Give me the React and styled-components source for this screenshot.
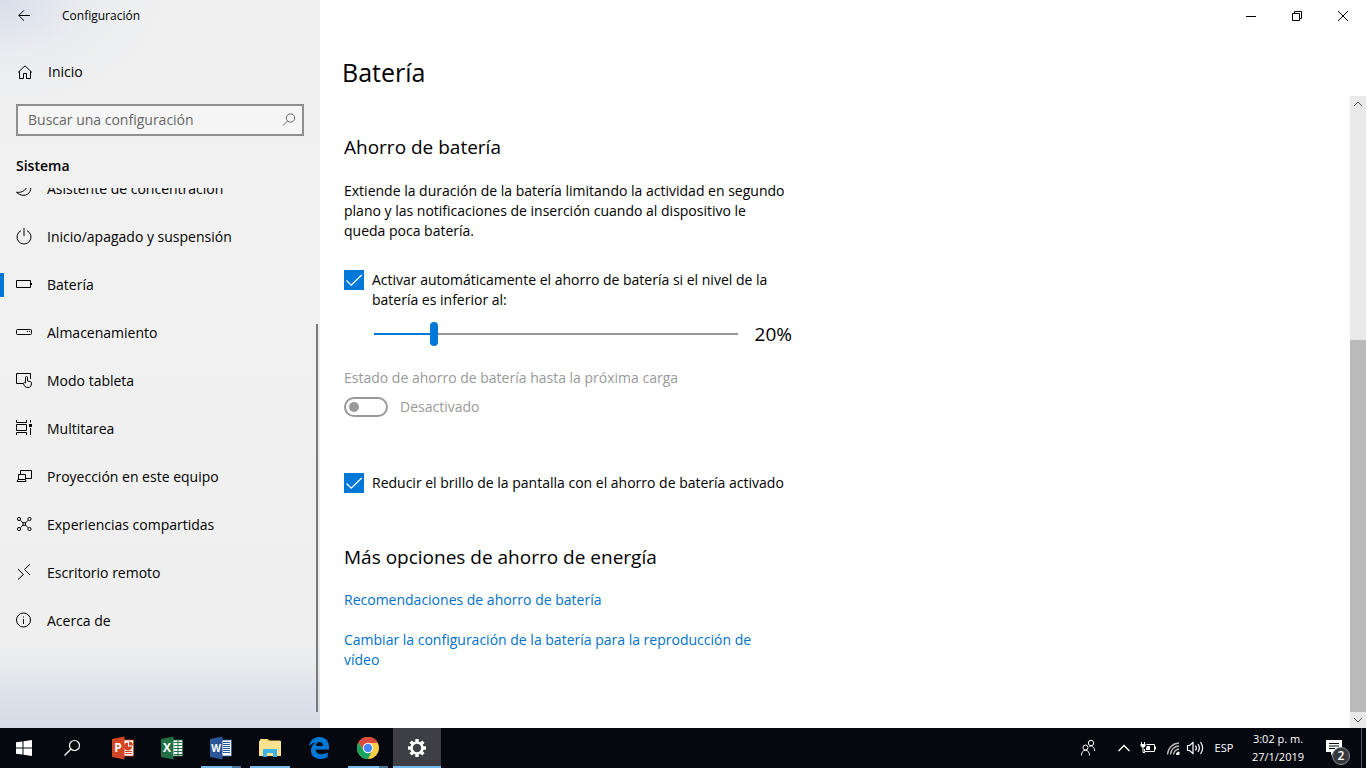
import React, { useState } from "react";
import styled, { createGlobalStyle } from "styled-components";

const GlobalStyle = createGlobalStyle`
  * {
    box-sizing: border-box;
  }
  body {
    margin: 0;
    overflow: hidden;
    background: #fff;
    color: #000;
    font-family: "Segoe UI", "Open Sans", "Noto Sans", sans-serif;
    font-size: 14px;
    line-height: 20px;
  }
  button, input {
    font: inherit;
    color: inherit;
    margin: 0;
    padding: 0;
  }
  button {
    border: 0;
    background: none;
  }
`;

const Desktop = styled.div`
  display: flex;
  flex-direction: column;
  height: 100vh;
`;

const SettingsWindow = styled.div`
  display: flex;
  flex: 1;
  min-height: 0;
`;

/* ---------- sidebar ---------- */

const Sidebar = styled.aside`
  display: flex;
  flex-direction: column;
  flex: 0 0 320px;
  background:
    radial-gradient(ellipse 170px 110px at 0 0, #d8deeb 0%, rgba(230, 233, 240, 0.6) 50%, rgba(240, 240, 240, 0) 100%),
    linear-gradient(to bottom, #f0f0f0 0%, #f1f1f1 40%, #efefef 86%, #ebecee 91%, #dde2eb 95%, #d6dce7 100%);
`;

const AppBar = styled.div`
  display: flex;
  align-items: center;
  height: 32px;
  font-size: 12px;
`;

const BackButton = styled.button`
  display: flex;
  align-items: center;
  justify-content: center;
  width: 48px;
  height: 32px;
  margin-right: 14px;
`;

const HomeLink = styled.a`
  display: flex;
  align-items: center;
  gap: 16px;
  height: 48px;
  margin-top: 16px;
  padding-left: 16px;
  color: inherit;
  text-decoration: none;
`;

const SearchBox = styled.label`
  display: flex;
  align-items: center;
  height: 32px;
  margin: 8px 16px 0;
  padding: 0 6px 0 10px;
  border: 2px solid #8f8f8f;
  background: #f5f5f5;
  color: #666;
`;

const SearchInput = styled.input`
  flex: 1;
  min-width: 0;
  border: 0;
  outline: 0;
  background: none;
  &::placeholder {
    color: #666;
    opacity: 1;
  }
`;

const SectionName = styled.h2`
  margin: 20px 16px 0;
  font-size: 14px;
  line-height: 20px;
  font-weight: 600;
`;

const Nav = styled.nav`
  position: relative;
  flex: 1;
  min-height: 0;
  margin-top: 12px;
  overflow: hidden;
`;

/* the list is scrolled by half a row */
const NavList = styled.ul`
  list-style: none;
  margin: -23px 0 0;
  padding: 0;
`;

const NavLink = styled.a`
  display: flex;
  align-items: center;
  gap: 15px;
  height: 48px;
  padding-left: 16px;
  background: ${(props) =>
    props.$active ? "linear-gradient(#0078d7, #0078d7) left center / 4px 24px no-repeat" : "none"};
  color: inherit;
  text-decoration: none;
`;

const NavScroll = styled.div`
  position: absolute;
  top: 136px;
  right: 2px;
  bottom: 16px;
  width: 2px;
  background: #7a7a7a;
`;

/* ---------- content ---------- */

const Main = styled.main`
  display: flex;
  flex-direction: column;
  flex: 1;
  min-width: 0;
  background: #fff;
`;

const WindowButtons = styled.div`
  display: flex;
  justify-content: flex-end;
  height: 32px;
`;

const WindowButton = styled.button`
  display: flex;
  align-items: center;
  justify-content: center;
  width: 46px;
  height: 32px;
`;

const PageTitle = styled.h1`
  margin: 20px 0 4px 22px;
  font-size: 25px;
  line-height: 40px;
  font-weight: 400;
`;

const ScrollArea = styled.div`
  display: flex;
  flex: 1;
  min-height: 0;
`;

const Content = styled.div`
  flex: 1;
  padding: 36px 24px 0;
`;

const Column = styled.div`
  max-width: 448px;
`;

const Heading = styled.h2`
  margin: 0 0 19px;
  font-size: 19px;
  line-height: 30px;
  font-weight: 400;
`;

const Text = styled.p`
  max-width: 444px;
  margin: 0;
`;

const CheckRow = styled.label`
  display: flex;
  align-items: flex-start;
  gap: 8px;
  margin-top: ${(props) => props.$top};
`;

const CheckHolder = styled.span`
  display: grid;
  flex: 0 0 20px;
  height: 20px;
  > * {
    grid-area: 1 / 1;
  }
  svg {
    pointer-events: none;
  }
`;

const CheckInput = styled.input`
  appearance: none;
  width: 20px;
  height: 20px;
  border: 2px solid #333;
  &:checked {
    border: 0;
    background: #0078d7;
  }
`;

const SliderRow = styled.div`
  display: flex;
  align-items: center;
  justify-content: space-between;
  height: 28px;
  margin-top: 10px;
  padding-left: 30px;
`;

const Slider = styled.input`
  appearance: none;
  width: 364px;
  height: 24px;
  background: none;
  &::-webkit-slider-runnable-track {
    height: 2px;
    background: linear-gradient(to right, #0078d7 var(--fill), #999 var(--fill));
  }
  &::-webkit-slider-thumb {
    appearance: none;
    width: 8px;
    height: 24px;
    margin-top: -11px;
    border-radius: 4px;
    background: #0078d7;
  }
`;

const SliderValue = styled.output`
  font-size: 19px;
  line-height: 28px;
`;

const Toggle = styled.div`
  display: grid;
  gap: 9px;
  margin-top: 20px;
  color: #999;
`;

const ToggleRow = styled.div`
  display: flex;
  align-items: center;
  gap: 12px;
`;

const Switch = styled.input`
  appearance: none;
  display: flex;
  align-items: center;
  width: 44px;
  height: 20px;
  padding-left: 3px;
  border: 2px solid #999;
  border-radius: 10px;
  &::before {
    content: "";
    width: 10px;
    height: 10px;
    border-radius: 5px;
    background: #999;
  }
`;

const MoreOptions = styled.section`
  display: grid;
  gap: 20px;
  margin-top: 49px;
  ${Heading} {
    margin: 0 0 -2px;
  }
`;

const TextLink = styled.a`
  max-width: 444px;
  color: #0072c9;
  text-decoration: none;
`;

const ScrollBar = styled.div`
  display: flex;
  flex-direction: column;
  flex: 0 0 16px;
  background: #e9e9e9;
`;

const ScrollArrow = styled.button`
  display: flex;
  align-items: center;
  justify-content: center;
  width: 16px;
  height: 16px;
`;

const ScrollTrack = styled.div`
  display: flex;
  flex: 1;
  align-items: flex-end;
`;

const ScrollThumb = styled.div`
  width: 16px;
  height: 62%;
  background: #bababa;
`;

/* ---------- taskbar ---------- */

const Taskbar = styled.footer`
  display: flex;
  justify-content: space-between;
  flex: 0 0 40px;
  background: #05090f;
  color: #fff;
`;

const TaskGroup = styled.div`
  display: flex;
  align-items: stretch;
  gap: ${(props) => props.$gap || "0"};
  margin-left: ${(props) => props.$start || "0"};
`;

const TaskButton = styled.button`
  display: flex;
  align-items: center;
  justify-content: center;
  width: 48px;
  height: 40px;
  background-color: ${(props) => (props.$state === "active" ? "#3d3f44" : "transparent")};
  background-image: ${(props) => {
    if (props.$state === "active") return "linear-gradient(#76b9ed, #76b9ed)";
    if (props.$state === "open") return "linear-gradient(#76b9ed, #76b9ed)";
    if (props.$state === "many") return "linear-gradient(to right, #76b9ed 31px, #4b7597 31px)";
    return "none";
  }};
  background-repeat: no-repeat;
  background-position: center bottom;
  background-size: ${(props) => (props.$state === "active" ? "48px 2px" : "40px 2px")};
`;

const Tray = styled.div`
  display: flex;
  align-items: center;
  font-size: 11px;
  line-height: 18px;
`;

const TrayButton = styled.button`
  display: flex;
  align-items: center;
  justify-content: center;
  width: ${(props) => props.$width};
  height: 40px;
`;

const Clock = styled.button`
  width: 68px;
  height: 40px;
  text-align: center;
`;

const Notifications = styled.button`
  position: relative;
  display: flex;
  align-items: center;
  justify-content: center;
  width: 44px;
  height: 40px;
`;

const Badge = styled.span`
  position: absolute;
  right: 6px;
  bottom: 3px;
  width: 18px;
  height: 18px;
  border: 1px solid #8d8f92;
  border-radius: 50%;
  background: #35383c;
  font-size: 12px;
  line-height: 16px;
  font-weight: 600;
`;

const ShowDesktop = styled.button`
  width: 5px;
  height: 40px;
  margin-left: 5px;
  border-left: 1px solid #55585c;
`;

/* ---------- icons ---------- */

const Line = ({ w = 16, h = 16, children, ...rest }) => (
  <svg
    width={w}
    height={h}
    viewBox={`0 0 ${w} ${h}`}
    fill="none"
    stroke="currentColor"
    overflow="visible"
    aria-hidden="true"
    {...rest}
  >
    {children}
  </svg>
);

const icons = {
  focus: (
    <Line>
      <path d="M13.500 2.500C17 8 13 14.300 8 14.300c-3 0-5.500-1-7.500-3C6 12 12 9 11 1.500" />
    </Line>
  ),
  power: (
    <Line>
      <path d="M5 1.700a7 7 0 1 0 6 0" />
      <path d="M8-1v8" strokeWidth="2" stroke="#777" />
    </Line>
  ),
  battery: (
    <Line>
      <path d="M.5 3.500h14v7H.5zM15.500 6v2" />
    </Line>
  ),
  storage: (
    <Line>
      <rect x=".5" y="4.500" width="15" height="5" rx="1" />
      <path d="M11 6.500h1M13 6.500h1" />
    </Line>
  ),
  tablet: (
    <Line>
      <path d="M7 10.500H.5V.5h14V6" />
      <path d="M9.500 10V4.500a1 1 0 0 1 2 0V8l2.500.5c1.100.2 1.500.7 1.500 1.600 0 3-1.200 4.400-3.500 4.400-2.600 0-4-1.500-4.500-4 0-1 1-1.500 2-.5" />
    </Line>
  ),
  multitask: (
    <Line>
      <path d="M.5-1v2.500h10V-1M.5 3.500h10v6H.5zM.5 14v-2.500h10V14M14.500-1v2.500M14.500 7v7" />
      <path d="M13 3h3v3h-3z" fill="currentColor" stroke="none" />
    </Line>
  ),
  project: (
    <Line>
      <path d="M4.500 5V1.500h11v8H10M2.500 10.500v-5h7v5M1 12.500h9l-.5-2H2z" />
    </Line>
  ),
  shared: (
    <Line>
      <circle cx="3" cy="2" r="1.600" />
      <circle cx="13.500" cy="2" r="1.600" />
      <circle cx="3" cy="12" r="1.600" />
      <circle cx="13.500" cy="12" r="1.600" />
      <path d="M4.500 3.300 7 6M12 3.300 9.500 6M4.500 10.700 7 8M12 10.700 9.500 8M7 5.700h2.500v2.600H7z" />
    </Line>
  ),
  remote: (
    <Line>
      <path d="M2 4.200 7.500 9.500 2 14.500M14-.8 8.500 4.500 14 10" />
    </Line>
  ),
  info: (
    <Line>
      <circle cx="7.500" cy="7" r="7" />
      <path d="M7.500 6v5M7.500 3.500v1" />
    </Line>
  ),
};

const OfficeIcon = ({ color, letter, children }) => (
  <svg width="24" height="24" viewBox="0 0 24 24" aria-hidden="true">
    <path d="M12 4h10.500v16H12z" fill="#fff" stroke={color} strokeWidth=".8" />
    {children}
    <path d="M1 3 13.500.5v23L1 21z" fill={color} />
    <text x="7" y="16" fill="#fff" fontSize={letter === "W" ? 10 : 12} fontWeight="700" textAnchor="middle">
      {letter}
    </text>
  </svg>
);

const navItems = [
  { icon: "focus", label: "Asistente de concentración" },
  { icon: "power", label: "Inicio/apagado y suspensión" },
  { icon: "battery", label: "Batería", active: true },
  { icon: "storage", label: "Almacenamiento" },
  { icon: "tablet", label: "Modo tableta" },
  { icon: "multitask", label: "Multitarea" },
  { icon: "project", label: "Proyección en este equipo" },
  { icon: "shared", label: "Experiencias compartidas" },
  { icon: "remote", label: "Escritorio remoto" },
  { icon: "info", label: "Acerca de" },
];

const CheckOption = ({ top, children }) => {
  const [checked, setChecked] = useState(true);
  return (
    <CheckRow $top={top}>
      <CheckHolder>
        <CheckInput type="checkbox" checked={checked} onChange={() => setChecked(!checked)} />
        {checked && (
          <Line w={20} h={20} stroke="#fff" strokeWidth="1.300">
            <path d="m2.500 10.500 4.700 4.700L17.700 5" />
          </Line>
        )}
      </CheckHolder>
      <span>{children}</span>
    </CheckRow>
  );
};

const SettingsSidebar = () => (
  <Sidebar>
    <AppBar>
      <BackButton aria-label="Atrás">
        <Line w={12} h={12}>
          <path d="M12 5.500H.8M6 .3.800 5.500 6 10.700" />
        </Line>
      </BackButton>
      <span>Configuración</span>
    </AppBar>
    <HomeLink href="#inicio">
      <Line>
        <path d="M2 8.500 9 1.800l7 6.700M3.500 7.500v7h4v-5h3v5h4v-7" />
      </Line>
      Inicio
    </HomeLink>
    <SearchBox>
      <SearchInput type="text" placeholder="Buscar una configuración" aria-label="Buscar una configuración" />
      <Line w={14} h={14}>
        <circle cx="8.500" cy="5" r="4.200" />
        <path d="M5.500 8 1 12.500" />
      </Line>
    </SearchBox>
    <SectionName>Sistema</SectionName>
    <Nav>
      <NavList>
        {navItems.map((item) => (
          <li key={item.label}>
            <NavLink href={"#" + item.icon} $active={item.active}>
              {icons[item.icon]}
              {item.label}
            </NavLink>
          </li>
        ))}
      </NavList>
      <NavScroll />
    </Nav>
  </Sidebar>
);

const BatteryPage = () => {
  const [level, setLevel] = useState(20);
  const fill = ((level - 5) / 95) * 100;

  return (
    <Main>
      <WindowButtons>
        <WindowButton aria-label="Minimizar">
          <Line w={10} h={10}>
            <path d="M0 5.500h10" />
          </Line>
        </WindowButton>
        <WindowButton aria-label="Restaurar">
          <Line w={10} h={10}>
            <path d="M.5 2.500h7v7h-7zM2.500 2.500v-2h7v7h-2" />
          </Line>
        </WindowButton>
        <WindowButton aria-label="Cerrar">
          <Line w={10} h={10}>
            <path d="m0 0 10 10M10 0 0 10" />
          </Line>
        </WindowButton>
      </WindowButtons>
      <PageTitle>Batería</PageTitle>
      <ScrollArea>
        <Content>
          <Column>
            <Heading>Ahorro de batería</Heading>
            <Text>
              Extiende la duración de la batería limitando la actividad en segundo plano y las
              notificaciones de inserción cuando al dispositivo le queda poca batería.
            </Text>
            <CheckOption top="29px">
              Activar automáticamente el ahorro de batería si el nivel de la batería es inferior al:
            </CheckOption>
            <SliderRow>
              <Slider
                id="level"
                type="range"
                min="5"
                max="100"
                value={level}
                aria-label="Nivel de batería"
                onChange={(e) => setLevel(Number(e.target.value))}
                style={{ "--fill": `${fill}%` }}
              />
              <SliderValue htmlFor="level">{level}%</SliderValue>
            </SliderRow>
            <Toggle>
              <label htmlFor="saver">Estado de ahorro de batería hasta la próxima carga</label>
              <ToggleRow>
                <Switch id="saver" type="checkbox" role="switch" disabled />
                <span>Desactivado</span>
              </ToggleRow>
            </Toggle>
            <CheckOption top="56px">
              Reducir el brillo de la pantalla con el ahorro de batería activado
            </CheckOption>
            <MoreOptions>
              <Heading>Más opciones de ahorro de energía</Heading>
              <TextLink href="#recomendaciones">Recomendaciones de ahorro de batería</TextLink>
              <TextLink href="#video">
                Cambiar la configuración de la batería para la reproducción de vídeo
              </TextLink>
            </MoreOptions>
          </Column>
        </Content>
        <ScrollBar>
          <ScrollArrow aria-label="Subir">
            <Line w={8} h={8} stroke="#555">
              <path d="m0 6 4-4 4 4" />
            </Line>
          </ScrollArrow>
          <ScrollTrack>
            <ScrollThumb />
          </ScrollTrack>
          <ScrollArrow aria-label="Bajar">
            <Line w={8} h={8} stroke="#555">
              <path d="m0 2 4 4 4-4" />
            </Line>
          </ScrollArrow>
        </ScrollBar>
      </ScrollArea>
    </Main>
  );
};

const BottomBar = () => (
  <Taskbar>
    <TaskGroup>
      <TaskButton aria-label="Inicio">
        <svg width="16" height="16" viewBox="0 0 16 16" fill="#fff">
          <path d="M0 2.300 6.500 1.400v6.100H0zM7.500 1.200 16 0v7.500H7.500zM0 8.500h6.500v6.100L0 13.700zM7.500 8.500H16V16l-8.500-1.200z" />
        </svg>
      </TaskButton>
      <TaskButton aria-label="Buscar">
        <Line strokeWidth="1.200">
          <circle cx="10.500" cy="5.500" r="5" />
          <path d="M7 9 .5 15.500" />
        </Line>
      </TaskButton>
      <TaskGroup $gap="1px" $start="3px">
        <TaskButton aria-label="PowerPoint">
          <OfficeIcon color="#d24625" letter="P">
            <path d="M17 6.500v4h4a4 4 0 1 1-4-4z" fill="#d24625" />
            <path d="M18 5.500a4 4 0 0 1 4 4h-4z" fill="#d24625" />
            <path d="M14 15.500h7M14 17.500h7" stroke="#d24625" />
          </OfficeIcon>
        </TaskButton>
        <TaskButton aria-label="Excel">
          <OfficeIcon color="#207245" letter="X">
            <path d="M14 6.500h8M14 9.500h8M14 12.500h8M14 15.500h8M14 18.500h8M18 4v16" stroke="#207245" />
          </OfficeIcon>
        </TaskButton>
        <TaskButton aria-label="Word" $state="many">
          <OfficeIcon color="#2a5699" letter="W">
            <path d="M14 6.500h7M14 8.500h7M14 10.500h7M14 12.500h7M14 14.500h7M14 16.500h7" stroke="#2a5699" />
          </OfficeIcon>
        </TaskButton>
        <TaskButton aria-label="Explorador de archivos" $state="open">
          <svg width="22" height="20" viewBox="0 0 22 20">
            <path d="M1 2.500V1h8l1.500 1.500H21V18H1z" fill="#f5c64a" />
            <path d="M0 3h22v15H0z" fill="#fde38f" />
            <path d="M2 1.500h6v1H2z" fill="#fff3c2" />
            <path d="M4 19v-8h14v8h-4v-4H8v4z" fill="#3fb3e8" />
          </svg>
        </TaskButton>
        <TaskButton aria-label="Edge">
          <svg width="20" height="22" viewBox="0 0 20 22">
            <path
              d="M0 9.500C.8 3.500 4.800 0 10.300 0 16.500 0 20 4.300 20 9.800v2.700H6.700c.2 3.300 2.600 4.800 5.800 4.800 2.300 0 4.300-.6 6.200-1.700v4.500c-2 1.200-4.700 1.900-7.400 1.900C5.500 22 2 18.700 2 13.300 2 9.500 4 6.700 7.600 5.200 4.500 5.500 1.700 6.800 0 9.500zM6.800 8.900h7.300c0-2.400-1.200-3.800-3.300-3.800-2.100 0-3.600 1.500-4 3.800z"
              fill="#0078d7"
            />
          </svg>
        </TaskButton>
        <TaskButton aria-label="Chrome" $state="many">
          <svg width="22" height="22" viewBox="0 0 22 22">
            <circle cx="11" cy="11" r="11" fill="#ffce44" />
            <path d="M1.470 5.500A11 11 0 0 1 20.530 5.500L20.800 6H11L6.700 13.500z" fill="#db4a3c" />
            <path d="M1.470 5.500A11 11 0 0 0 11 22l4.300-8.500H6.700z" fill="#1aa260" />
            <circle cx="11" cy="11" r="5.200" fill="#fff" />
            <circle cx="11" cy="11" r="4.200" fill="#4587f3" />
          </svg>
        </TaskButton>
        <TaskButton aria-label="Configuración" $state="active">
          <svg width="18" height="18" viewBox="-9 -9 18 18">
            <circle r="5.500" fill="none" stroke="#fff" strokeWidth="2.600" />
            {[0, 45, 90, 135, 180, 225, 270, 315].map((angle) => (
              <path key={angle} d="M-1.700-9h3.400v3h-3.400z" fill="#fff" transform={`rotate(${angle})`} />
            ))}
          </svg>
        </TaskButton>
      </TaskGroup>
    </TaskGroup>
    <Tray>
      <TrayButton $width="48px" aria-label="Contactos">
        <Line w={14}>
          <circle cx="4.500" cy="7.500" r="2.500" />
          <path d="M.5 15.500c0-3.200 1.500-5.200 4-5.200s4 2 4 5.200" />
          <circle cx="10" cy="3" r="2.700" />
          <path d="M8.500 6.500c3-1.200 5 1 5.200 4.500" />
        </Line>
      </TrayButton>
      <TrayButton $width="24px" aria-label="Mostrar iconos ocultos">
        <Line w={12} h={8} strokeWidth="1.400">
          <path d="m.5 7 5.500-5.500L11.500 7" />
        </Line>
      </TrayButton>
      <TrayButton $width="24px" aria-label="Batería">
        <Line>
          <path d="M6.500 4.500h8v7h-10V9M15.500 6.500v3M1.500 2v2M4.500 2v2M3 7v5.500h2" />
          <path d="M.5 4h5v2L4 7.500H2L.5 6zM7 6h3v4H6V8z" fill="currentColor" stroke="none" />
        </Line>
      </TrayButton>
      <TrayButton $width="26px" aria-label="Red">
        <Line w={14} h={14} stroke="#bbb">
          <path d="M1.500 13.500C2 7 6.500 2.500 13 2M4.500 13.500C5 9 8 5.500 13 5M7.500 13.500C8 10.500 9.500 8.500 13 8" strokeWidth="1.300" />
          <path d="M10.500 13.500c0-1.700.8-2.500 2.500-2.500v2.500z" stroke="#fff" fill="#fff" />
        </Line>
      </TrayButton>
      <TrayButton $width="18px" aria-label="Volumen">
        <Line strokeWidth="1.200">
          <path d="M.5 5.500h2l3.500-3v11l-3.500-3h-2zM8.500 5.500c1 1.500 1 3.500 0 5M11 4c1.700 2.500 1.700 5.500 0 8M13.500 2c2.600 3.700 2.600 8.300 0 12" />
        </Line>
      </TrayButton>
      <TrayButton $width="40px">ESP</TrayButton>
      <Clock>
        3:02 p. m.
        <br />
        27/1/2019
      </Clock>
      <Notifications aria-label="Notificaciones">
        <svg width="16" height="16" viewBox="0 0 16 16">
          <path d="M0 0h16v12H8l-3 3.500V12H0z" fill="#fff" />
          <path d="M3 3.500h10M3 6h10M3 8.500h6" stroke="#05090f" />
        </svg>
        <Badge>2</Badge>
      </Notifications>
      <ShowDesktop aria-label="Mostrar escritorio" />
    </Tray>
  </Taskbar>
);

const App = () => (
  <>
    <GlobalStyle />
    <Desktop>
      <SettingsWindow>
        <SettingsSidebar />
        <BatteryPage />
      </SettingsWindow>
      <BottomBar />
    </Desktop>
  </>
);

export default App;
